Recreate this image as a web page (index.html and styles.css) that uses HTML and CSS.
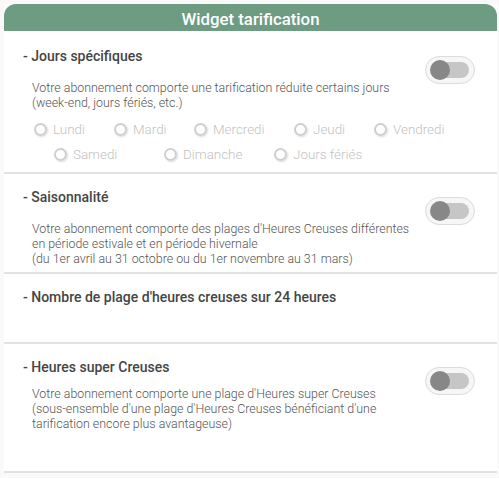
FILE: index.html
```html
<!DOCTYPE html>
<html lang="fr">
<head>
<meta charset="utf-8">
<title>Widget tarification</title>
<link rel="stylesheet" href="styles.css">
</head>
<body>
<div class="card">
  <div class="card-header">Widget tarification</div>

  <section class="section section-days">
    <div class="row">
      <div class="content">
        <h3 class="title">- Jours spécifiques</h3>
        <p class="desc">Votre abonnement comporte une tarification réduite certains jours<br>(week-end, jours fériés, etc.)</p>
      </div>
      <div class="toggle"><span class="track"></span><span class="knob"></span></div>
    </div>
    <div class="radios radios-1">
      <label class="radio"><span class="circle"></span>Lundi</label>
      <label class="radio"><span class="circle"></span>Mardi</label>
      <label class="radio"><span class="circle"></span>Mercredi</label>
      <label class="radio"><span class="circle"></span>Jeudi</label>
      <label class="radio"><span class="circle"></span>Vendredi</label>
    </div>
    <div class="radios radios-2">
      <label class="radio"><span class="circle"></span>Samedi</label>
      <label class="radio"><span class="circle"></span>Dimanche</label>
      <label class="radio"><span class="circle"></span>Jours fériés</label>
    </div>
  </section>

  <section class="section section-season">
    <div class="row">
      <div class="content">
        <h3 class="title">- Saisonnalité</h3>
        <p class="desc">Votre abonnement comporte des plages d'Heures Creuses différentes<br>en période estivale et en période hivernale<br>(du 1er avril au 31 octobre ou du 1er novembre au 31 mars)</p>
      </div>
      <div class="toggle"><span class="track"></span><span class="knob"></span></div>
    </div>
  </section>

  <section class="section section-count">
    <h3 class="title">- Nombre de plage d'heures creuses sur 24 heures</h3>
  </section>

  <section class="section section-super">
    <div class="row">
      <div class="content">
        <h3 class="title">- Heures super Creuses</h3>
        <p class="desc desc-tight">Votre abonnement comporte une plage d'Heures super Creuses<br>(sous-ensemble d'une plage d'Heures Creuses bénéficiant d'une<br>tarification encore plus avantageuse)</p>
      </div>
      <div class="toggle"><span class="track"></span><span class="knob"></span></div>
    </div>
  </section>
</div>
</body>
</html>
```

FILE: styles.css
```css
html, body {
  margin: 0;
  padding: 0;
}
body {
  background: #f9f9f9;
  font-family: Roboto, "Liberation Sans", sans-serif;
  padding: 4px 2px 0 4px;
}
.card {
  width: 493px;
  background: #ffffff;
}
.card-header {
  height: 27px;
  line-height: 31px;
  background: #6e9c83;
  color: #ffffff;
  text-align: center;
  font-size: 16.8px;
  font-weight: 500;
  border-radius: 12px 12px 0 0;
}
.section {
  border-bottom: 2px solid #e2e2e2;
  padding: 16px 22px 0 19px;
}
.row {
  display: flex;
  justify-content: space-between;
  align-items: flex-start;
}
.title {
  margin: 0;
  font-size: 14px;
  font-weight: 500;
  line-height: 18px;
  color: #454545;
}
.desc {
  margin: 15px 0 0 9px;
  font-size: 12.4px;
  font-weight: 300;
  line-height: 15px;
  color: #555555;
}
.desc-tight {
  margin-top: 10px;
}
.toggle {
  position: relative;
  width: 48px;
  height: 26px;
  margin-top: 9px;
  border: 1px solid #dcdcdc;
  border-radius: 15px;
  background: #f6f6f6;
  flex: none;
}
.track {
  position: absolute;
  left: 5px;
  top: 5px;
  width: 38px;
  height: 16px;
  border-radius: 8px;
  background: #c6c6c6;
}
.knob {
  position: absolute;
  left: 4px;
  top: 3px;
  width: 20px;
  height: 20px;
  border-radius: 50%;
  background: #878787;
}
.section-days {
  height: 125px;
}
.radios {
  display: grid;
  font-size: 13.4px;
  font-weight: 300;
  color: #c2c2c2;
  line-height: 25px;
}
.radios-1 {
  margin-top: 7px;
  padding-left: 11px;
  grid-template-columns: 80px 80px 100px 80px auto;
}
.radios-2 {
  padding-left: 31px;
  grid-template-columns: 110px 110px auto;
}
.radio {
  display: flex;
  align-items: center;
  gap: 6px;
  height: 25px;
}
.circle {
  width: 9px;
  height: 9px;
  border: 2px solid #cfcfcf;
  border-radius: 50%;
  box-shadow: 1px 1px 2px rgba(0, 0, 0, 0.15);
}
.section-season {
  height: 84px;
  padding-top: 14px;
}
.section-count {
  height: 54px;
  padding-top: 14px;
}
.section-super {
  height: 113px;
  padding-top: 14px;
}
```
